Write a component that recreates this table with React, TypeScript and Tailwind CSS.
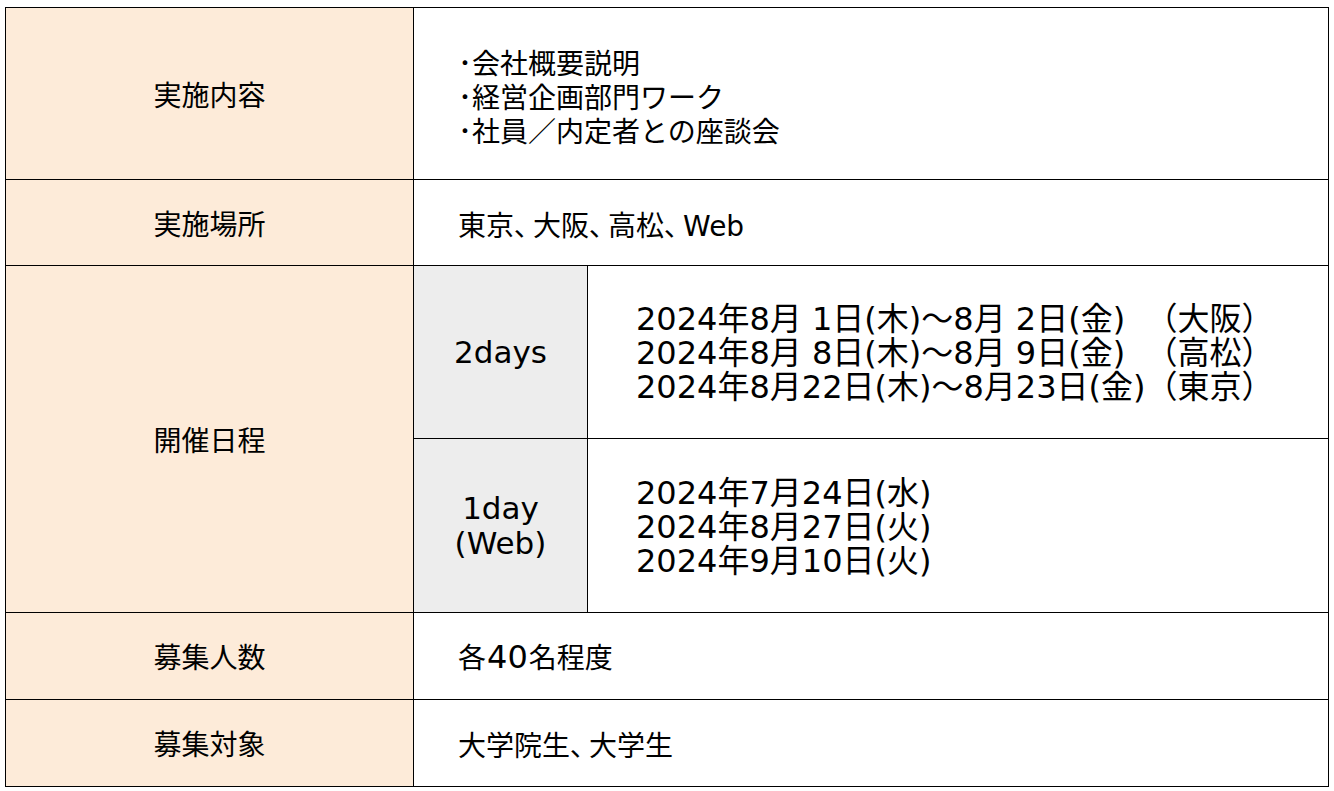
import React from "react";

const font = { fontFamily: '"DejaVu Sans", "Noto Sans CJK JP", sans-serif' };
const cjk = { fontFamily: '"Noto Sans CJK JP", "Noto Sans", sans-serif' };

function Comma() {
  return <span className="[font-feature-settings:'palt'] pr-[5px]" style={cjk}>、</span>;
}

export default function App() {
  return (
    <div className="w-[1334px] h-[791px] bg-white pt-[7px] pl-[5px] text-black" style={font}>
      <div className="grid w-[1324px] grid-cols-[407px_173px_1fr] grid-rows-[171px_85px_172px_173px_86px_86px] gap-px bg-black p-px text-[28px] leading-[34px]">
        <div className="bg-[#fdebd9] flex items-center justify-center" style={cjk}>実施内容</div>
        <div className="col-span-2 bg-white flex flex-col justify-center pl-[44px] pt-[4px] leading-[34px]" style={cjk}>
          <div className="h-[34px]"><span className="inline-block w-[14px]">･</span>会社概要説明</div>
          <div className="h-[34px]"><span className="inline-block w-[14px]">･</span>経営企画部門ワーク</div>
          <div className="h-[34px]"><span className="inline-block w-[14px]">･</span>社員／内定者との座談会</div>
        </div>

        <div className="bg-[#fdebd9] flex items-center justify-center" style={cjk}>実施場所</div>
        <div className="col-span-2 bg-white flex items-center pl-[44px] pt-[5px]">
          <span>東京<Comma />大阪<Comma />高松<Comma />Web</span>
        </div>

        <div className="row-span-2 bg-[#fdebd9] flex items-center justify-center" style={cjk}>開催日程</div>
        <div className="bg-[#ededed] flex items-center justify-center text-[31px]">2days</div>
        <div className="bg-white flex items-center pl-[48px] pt-[2px] text-[32px] leading-[34px]">
          <div className="grid grid-cols-[auto_auto] whitespace-pre">
            <span>2024年8月 1日(木)～8月 2日(金)</span>
            <span>（大阪）</span>
            <span>2024年8月 8日(木)～8月 9日(金)</span>
            <span>（高松）</span>
            <span>2024年8月22日(木)～8月23日(金)</span>
            <span>（東京）</span>
          </div>
        </div>
        <div className="bg-[#ededed] flex flex-col items-center justify-center text-[31px] leading-[35px]">
          <div>1day</div>
          <div>(Web)</div>
        </div>
        <div className="bg-white flex flex-col justify-center pl-[48px] pt-[2px] text-[32px] leading-[34px]">
          <div>2024年7月24日(水)</div>
          <div>2024年8月27日(火)</div>
          <div>2024年9月10日(火)</div>
        </div>

        <div className="bg-[#fdebd9] flex items-center justify-center" style={cjk}>募集人数</div>
        <div className="col-span-2 bg-white flex items-center pl-[44px] pt-[4px]">
          <span>各<span className="text-[32px] px-[1px]">40</span>名程度</span>
        </div>

        <div className="bg-[#fdebd9] flex items-center justify-center" style={cjk}>募集対象</div>
        <div className="col-span-2 bg-white flex items-center pl-[44px] pt-[5px]">
          <span>大学院生<Comma />大学生</span>
        </div>
      </div>
    </div>
  );
}
